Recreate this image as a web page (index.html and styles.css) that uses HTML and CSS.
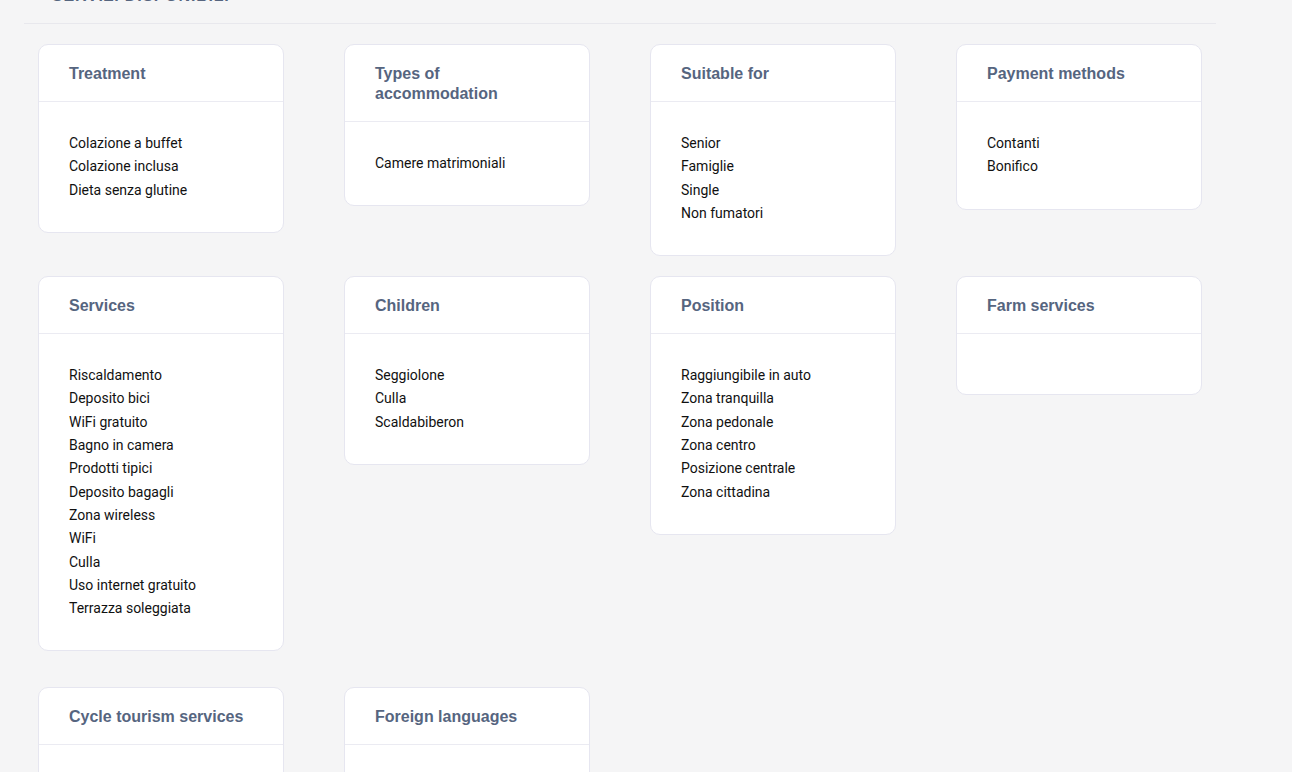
FILE: index.html
```html
<!DOCTYPE html>
<html lang="en">
<head>
    <meta charset="UTF-8">
    <meta name="viewport" content="width=device-width, initial-scale=1.0">
    <title>Servizi disponibili</title>
    <link rel="stylesheet" href="styles.css">
</head>
<body>
    <div id="main">
        <h2 class="section-title">SERVIZI DISPONIBILI</h2>
        <div class="cards">
            <div class="card">
                <div class="card-head">Treatment</div>
                <ul class="card-body">
                    <li>Colazione a buffet</li>
                    <li>Colazione inclusa</li>
                    <li>Dieta senza glutine</li>
                </ul>
            </div>
            <div class="card">
                <div class="card-head">Types of accommodation</div>
                <ul class="card-body">
                    <li>Camere matrimoniali</li>
                </ul>
            </div>
            <div class="card">
                <div class="card-head">Suitable for</div>
                <ul class="card-body">
                    <li>Senior</li>
                    <li>Famiglie</li>
                    <li>Single</li>
                    <li>Non fumatori</li>
                </ul>
            </div>
            <div class="card">
                <div class="card-head">Payment methods</div>
                <ul class="card-body">
                    <li>Contanti</li>
                    <li>Bonifico</li>
                </ul>
            </div>

            <div class="card">
                <div class="card-head">Services</div>
                <ul class="card-body">
                    <li>Riscaldamento</li>
                    <li>Deposito bici</li>
                    <li>WiFi gratuito</li>
                    <li>Bagno in camera</li>
                    <li>Prodotti tipici</li>
                    <li>Deposito bagagli</li>
                    <li>Zona wireless</li>
                    <li>WiFi</li>
                    <li>Culla</li>
                    <li>Uso internet gratuito</li>
                    <li>Terrazza soleggiata</li>
                </ul>
            </div>
            <div class="card">
                <div class="card-head">Children</div>
                <ul class="card-body">
                    <li>Seggiolone</li>
                    <li>Culla</li>
                    <li>Scaldabiberon</li>
                </ul>
            </div>
            <div class="card">
                <div class="card-head">Position</div>
                <ul class="card-body">
                    <li>Raggiungibile in auto</li>
                    <li>Zona tranquilla</li>
                    <li>Zona pedonale</li>
                    <li>Zona centro</li>
                    <li>Posizione centrale</li>
                    <li>Zona cittadina</li>
                </ul>
            </div>
            <div class="card">
                <div class="card-head">Farm services</div>
                <ul class="card-body"></ul>
            </div>

            <div class="card late">
                <div class="card-head">Cycle tourism services</div>
                <ul class="card-body">
                    <li>Deposito bici</li>
                </ul>
            </div>
            <div class="card late">
                <div class="card-head">Foreign languages</div>
                <ul class="card-body">
                    <li>Italiano</li>
                </ul>
            </div>
        </div>
    </div>
</body>
</html>
```

FILE: styles.css
```css
body {
    margin: 0;
    background-color: #f5f5f6;
    font-family: Roboto, "Liberation Sans", Arial, sans-serif;
    overflow: hidden;
}
#main {
    width: 1192px;
    margin-left: 24px;
}
.section-title {
    margin: -14px 0 0;
    padding: 0 28px 17px;
    font-family: "Liberation Sans", Arial, sans-serif;
    font-size: 16px;
    line-height: 20px;
    letter-spacing: 0.8px;
    color: #56657f;
    border-bottom: 1px solid #e8e8ed;
}
.cards {
    display: grid;
    grid-template-columns: repeat(4, 246px);
    column-gap: 60px;
    row-gap: 20px;
    align-items: start;
    padding: 20px 14px 0;
}
.card {
    background-color: #fff;
    border: 1px solid #e6e6f0;
    border-radius: 10px;
}
.card.late {
    margin-top: 16px;
}
.card-head {
    padding: 19px 30px 17px;
    font-family: "Liberation Sans", Arial, sans-serif;
    font-weight: bold;
    font-size: 16px;
    line-height: 20px;
    color: #56657f;
    border-bottom: 1px solid #ebebf2;
}
.card-body {
    list-style: none;
    margin: 0;
    padding: 30px;
    font-size: 14px;
    line-height: 23.3px;
    color: #111;
}
```
